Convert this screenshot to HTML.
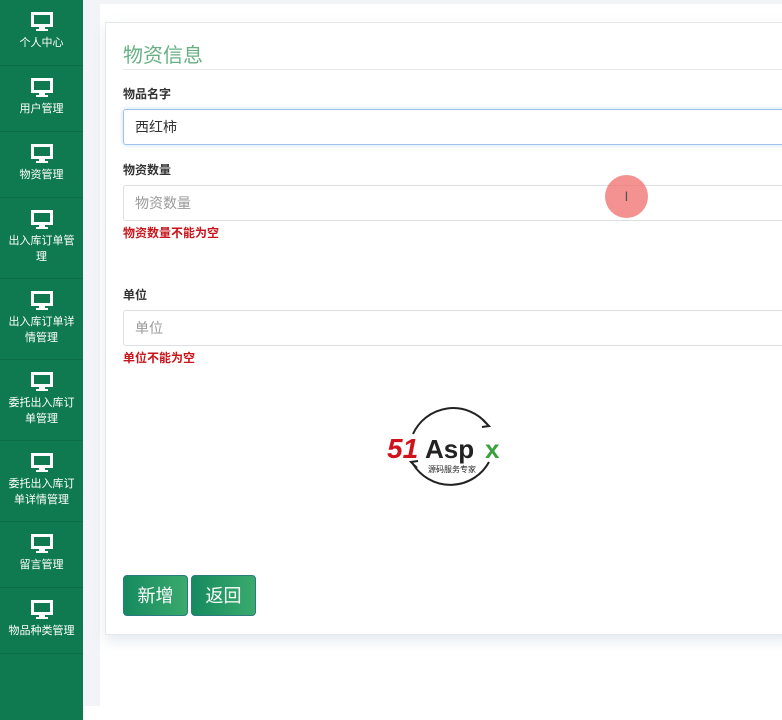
<!DOCTYPE html>
<html><head><meta charset="utf-8"><style>
*{margin:0;padding:0;box-sizing:border-box}
body{width:782px;height:720px;overflow:hidden;background:#fff;font-family:"Liberation Sans","Noto Sans CJK SC",sans-serif;position:relative}
.sb{position:absolute;left:0;top:0;width:83px;height:720px;background:#0f7a4f}
.it{position:absolute;left:0;width:83px;text-align:center;color:#fff;font-size:11px;line-height:16px;border-bottom:1px solid #0c6e46}
.it svg{display:block;margin:0 auto 3px}
.gray{position:absolute;left:83px;top:0;width:17px;height:706px;background:#f3f4f8}
.gtop{position:absolute;left:83px;top:0;width:699px;height:4px;background:#f3f4f8}
.card{position:absolute;left:105px;top:22px;width:690px;height:613px;background:#fff;border:1px solid #e6e8ec;box-shadow:0 6px 12px rgba(180,195,210,.35)}
.title{position:absolute;left:17px;top:16px;font-size:20px;color:#66b083}
.hr{position:absolute;left:17px;right:0;top:46px;border-top:1px solid #e8e8e8}
.lbl{position:absolute;left:17px;font-size:12px;font-weight:bold;color:#333}
.inp{position:absolute;left:17px;width:700px;height:36px;border:1px solid #dcdfe3;border-radius:3px;padding-left:11px;font-size:14px;line-height:34px;color:#999}
.err{position:absolute;left:17px;font-size:12px;font-weight:bold;color:#c9141b}
.btn{position:absolute;top:552px;width:65px;height:41px;border-radius:4px;background:linear-gradient(90deg,#168a60,#3aaa6c);color:#fff;font-size:18px;text-align:center;line-height:41px;border:1px solid #2a7a80}
</style></head><body>
<div class="gray"></div><div class="gtop"></div>
<div class="sb">
<div class="it" style="top:0;height:66px;padding-top:12px"><svg width="22" height="20" viewBox="0 0 22 20"><rect x="1.5" y="1.5" width="19" height="12" fill="none" stroke="#fff" stroke-width="3"/><rect x="8" y="14" width="6" height="3" fill="#fff"/><rect x="5" y="17" width="12" height="2" fill="#fff"/></svg>个人中心</div>
<div class="it" style="top:66px;height:66px;padding-top:12px"><svg width="22" height="20" viewBox="0 0 22 20"><rect x="1.5" y="1.5" width="19" height="12" fill="none" stroke="#fff" stroke-width="3"/><rect x="8" y="14" width="6" height="3" fill="#fff"/><rect x="5" y="17" width="12" height="2" fill="#fff"/></svg>用户管理</div>
<div class="it" style="top:132px;height:66px;padding-top:12px"><svg width="22" height="20" viewBox="0 0 22 20"><rect x="1.5" y="1.5" width="19" height="12" fill="none" stroke="#fff" stroke-width="3"/><rect x="8" y="14" width="6" height="3" fill="#fff"/><rect x="5" y="17" width="12" height="2" fill="#fff"/></svg>物资管理</div>
<div class="it" style="top:198px;height:81px;padding-top:12px"><svg width="22" height="20" viewBox="0 0 22 20"><rect x="1.5" y="1.5" width="19" height="12" fill="none" stroke="#fff" stroke-width="3"/><rect x="8" y="14" width="6" height="3" fill="#fff"/><rect x="5" y="17" width="12" height="2" fill="#fff"/></svg>出入库订单管<br>理</div>
<div class="it" style="top:279px;height:81px;padding-top:12px"><svg width="22" height="20" viewBox="0 0 22 20"><rect x="1.5" y="1.5" width="19" height="12" fill="none" stroke="#fff" stroke-width="3"/><rect x="8" y="14" width="6" height="3" fill="#fff"/><rect x="5" y="17" width="12" height="2" fill="#fff"/></svg>出入库订单详<br>情管理</div>
<div class="it" style="top:360px;height:81px;padding-top:12px"><svg width="22" height="20" viewBox="0 0 22 20"><rect x="1.5" y="1.5" width="19" height="12" fill="none" stroke="#fff" stroke-width="3"/><rect x="8" y="14" width="6" height="3" fill="#fff"/><rect x="5" y="17" width="12" height="2" fill="#fff"/></svg>委托出入库订<br>单管理</div>
<div class="it" style="top:441px;height:81px;padding-top:12px"><svg width="22" height="20" viewBox="0 0 22 20"><rect x="1.5" y="1.5" width="19" height="12" fill="none" stroke="#fff" stroke-width="3"/><rect x="8" y="14" width="6" height="3" fill="#fff"/><rect x="5" y="17" width="12" height="2" fill="#fff"/></svg>委托出入库订<br>单详情管理</div>
<div class="it" style="top:522px;height:66px;padding-top:12px"><svg width="22" height="20" viewBox="0 0 22 20"><rect x="1.5" y="1.5" width="19" height="12" fill="none" stroke="#fff" stroke-width="3"/><rect x="8" y="14" width="6" height="3" fill="#fff"/><rect x="5" y="17" width="12" height="2" fill="#fff"/></svg>留言管理</div>
<div class="it" style="top:588px;height:66px;padding-top:12px"><svg width="22" height="20" viewBox="0 0 22 20"><rect x="1.5" y="1.5" width="19" height="12" fill="none" stroke="#fff" stroke-width="3"/><rect x="8" y="14" width="6" height="3" fill="#fff"/><rect x="5" y="17" width="12" height="2" fill="#fff"/></svg>物品种类管理</div>
</div>
<div class="card">
<div class="title">物资信息</div>
<div class="hr"></div>
<div class="lbl" style="top:62px">物品名字</div>
<div class="inp" style="top:86px;color:#333;border-color:#9fc3e8;box-shadow:0 0 4px rgba(100,160,220,.4)">西红柿</div>
<div class="lbl" style="top:138px">物资数量</div>
<div class="inp" style="top:162px">物资数量</div>
<div class="err" style="top:201px">物资数量不能为空</div>
<div class="lbl" style="top:263px">单位</div>
<div class="inp" style="top:287px">单位</div>
<div class="err" style="top:326px">单位不能为空</div>
<div class="btn" style="left:17px">新增</div>
<div class="btn" style="left:85px">返回</div>
</div>
<div style="position:absolute;left:605px;top:175px;width:43px;height:43px;border-radius:50%;background:rgba(240,110,110,.75);color:#555;font-size:14px;text-align:center;line-height:43px">I</div>
<svg style="position:absolute;left:385px;top:400px" width="130" height="96" viewBox="0 0 130 96">
<path d="M28 34 A44 44 0 0 1 102 24" fill="none" stroke="#222" stroke-width="2"/>
<path d="M98 20 L104 26 L97 27" fill="none" stroke="#222" stroke-width="2"/>
<path d="M104 62 A44 44 0 0 1 28 64" fill="none" stroke="#222" stroke-width="2"/>
<path d="M32 68 L26 62 L33 61" fill="none" stroke="#222" stroke-width="2"/>
<text x="2" y="58" font-family="Liberation Sans" font-weight="bold" font-style="italic" font-size="28" fill="#d0121b">51</text>
<text x="40" y="58" font-family="Liberation Sans" font-weight="bold" font-size="26" fill="#222">Asp</text>
<text x="100" y="58" font-family="Liberation Sans" font-weight="bold" font-size="26" fill="#3aa040">x</text>
<text x="43" y="72" font-family="Noto Sans CJK SC" font-size="8" fill="#222">源码服务专家</text>
</svg>
</body></html>
